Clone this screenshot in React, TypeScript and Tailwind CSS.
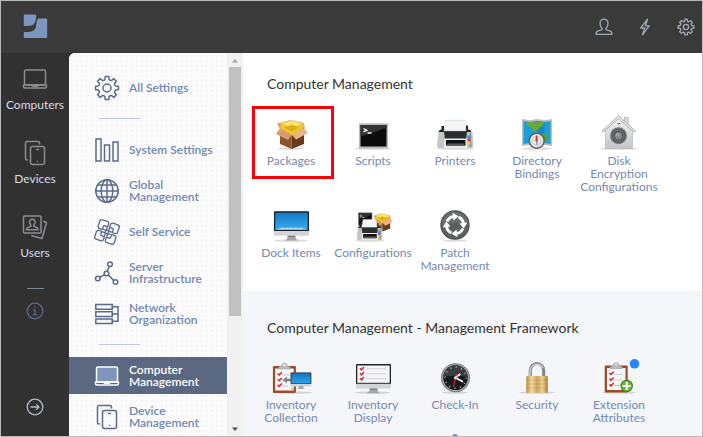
import type { ReactNode } from 'react';

/* ---------- line icons ---------- */

function gearPath(c: number, outer: number, root: number) {
  const step = Math.PI / 4;
  const at = (r: number, a: number) => `${(c + r * Math.sin(a)).toFixed(2)} ${(c - r * Math.cos(a)).toFixed(2)}`;
  let d = '';
  for (let i = 0; i < 8; i++) {
    const a = i * step;
    d += `${i === 0 ? 'M' : 'L'}${at(root, a - 0.24)}L${at(outer, a - 0.16)}L${at(outer, a + 0.16)}L${at(root, a + 0.24)}`;
    d += `Q${at(root * 0.9, a + step / 2)} ${at(root, a + step - 0.24)}`;
  }
  return d + 'Z';
}

type LineProps = { size?: number; weight?: number; children: ReactNode };

function Line({ size = 26, weight = 1.5, children }: LineProps) {
  return (
    <svg
      width={size}
      height={size}
      viewBox={`0 0 ${size} ${size}`}
      fill="none"
      stroke="currentColor"
      strokeWidth={weight}
      strokeLinejoin="round"
      strokeLinecap="round"
      aria-hidden="true"
    >
      {children}
    </svg>
  );
}

const GearIcon = () => (
  <Line>
    <path d={gearPath(13, 11.6, 8.8)} />
    <circle cx="13" cy="13" r="4" />
  </Line>
);

const SmallGearIcon = () => (
  <Line size={18} weight={1.3}>
    <path d={gearPath(9, 7.9, 6)} />
    <circle cx="9" cy="9" r="2.6" />
  </Line>
);

const PersonIcon = () => (
  <Line size={18} weight={1.3}>
    <path d="M9 1.200c-2.500 0-4 1.700-4 4 0 2 .5 3.400 1.700 4.800.6.8.3 1.700-.6 2L2.600 13.200c-1 .4-1.600 1.300-1.600 3.100h16c0-1.800-.6-2.700-1.600-3.100L11.900 12c-.9-.3-1.200-1.200-.6-2C12.500 8.600 13 7.200 13 5.200c0-2.300-1.500-4-4-4z" />
  </Line>
);

const BoltIcon = () => (
  <Line size={18} weight={1.3}>
    <path d="M11.500 1.200L4.800 10h4L6.500 16.800 13.200 7.800H9.500z" />
  </Line>
);

const LaptopIcon = ({ fill = 'none' }: { fill?: string }) => (
  <Line>
    <rect x="2.500" y="4" width="21" height="15" rx="1.500" fill={fill} />
    <path d="M1.500 19h23v1.500q0 1.500-1.500 1.500h-20q-1.500 0-1.500-1.500zM10 19.300q0 1 1 1h4q1 0 1-1" />
  </Line>
);

const DeviceIcon = () => (
  <Line>
    <path d="M5.500 20H5q-1.500 0-1.500-1.500V3Q3.500 1.500 5 1.500h11q1.500 0 1.500 1.500v1" />
    <rect x="8.500" y="6.500" width="14" height="18" rx="2" />
    <path d="M14.500 9.500h2M15.500 21.500v.1" />
  </Line>
);

const PhotosIcon = () => (
  <Line>
    <rect x="1.500" y="2" width="17.500" height="17" rx="1" />
    <path d="M10.200 5.200c-2 0-2.800 1.400-2.600 3 .1 1.300.6 2.200 1.200 2.900v1.300L5.300 13.800q-.8.5-.8 2h11.500q0-1.500-.8-2l-3.400-1.400v-1.300c.6-.7 1.100-1.600 1.200-2.900.2-1.600-.8-3-2.800-3z" />
    <path d="M21.500 7.500l3 1-4.500 16L9.800 21.700" />
  </Line>
);

const InfoIcon = () => (
  <Line size={18} weight={1.3}>
    <circle cx="9" cy="9" r="7.800" />
    <path d="M7.500 7.800H9v5M7.300 12.900h3.400M9 5v.3" />
  </Line>
);

const ArrowIcon = () => (
  <Line size={18} weight={1.3}>
    <circle cx="9" cy="9" r="7.800" />
    <path d="M5 9h8M10.500 6.600L13 9l-2.500 2.400" />
  </Line>
);

const BarsIcon = () => (
  <Line>
    <path d="M2 2h5v22H2zM10.500 8h5v16h-5zM19 5h5v19h-5z" strokeLinejoin="miter" />
  </Line>
);

const GlobeIcon = () => (
  <Line>
    <circle cx="13" cy="13" r="11.200" />
    <ellipse cx="13" cy="13" rx="5.800" ry="11.200" />
    <path d="M13 2v22M2 13h22M4 7h18M4 19h18" />
  </Line>
);

const SelfServiceIcon = () => (
  <Line weight={1.3}>
    <g transform="rotate(18 13 13)">
      <path d="M12 7.500V5Q12 2.800 10 2.800H5Q2.800 2.800 2.800 5v5q0 2 2.200 2h2.500M14 7.500V5q0-2.200 2-2.200h5q2.200 0 2.200 2.200v5q0 2-2.200 2h-2.500M12 18.500V21q0 2.200-2 2.200H5Q2.800 23.200 2.800 21v-5q0-2 2.200-2h2.500M14 18.500V21q0 2.200 2 2.200h5q2.200 0 2.200-2.200v-5q0-2-2.200-2h-2.500" />
      <path d="M9 7.800h2.800v3.800H7.800V9q0-1.200 1.200-1.200zM14.200 7.800H17q1.200 0 1.200 1.200v2.600h-4zM7.800 14.200h4v4H9q-1.200 0-1.200-1.200zM14.200 14.200h4V17q0 1.200-1.200 1.200h-2.800z" />
      <circle cx="13" cy="13" r="1.700" />
    </g>
  </Line>
);

const NodesIcon = () => (
  <Line>
    <circle cx="12.500" cy="13.500" r="2.300" />
    <circle cx="16" cy="4.300" r="2.300" />
    <circle cx="3.800" cy="18.500" r="2.300" />
    <circle cx="21.500" cy="22" r="2.300" />
    <path d="M13.300 11.300L15.200 6.500M10.500 14.700L5.800 17.300M14.300 15l5.400 5.400" />
  </Line>
);

const RacksIcon = () => (
  <Line>
    <path d="M1.800 3.500h16.500v4.700H1.800zM1.800 10.700h16.500v4.700H1.800zM1.800 17.900h16.500v4.700H1.800z" strokeLinejoin="miter" />
    <path d="M18.300 5.800H24v14.400h-5.700M18.300 13H24" strokeLinejoin="miter" />
  </Line>
);

const Logo = () => (
  <svg width="25" height="25" viewBox="0 0 25 25" fill="#7c96bf" role="img" aria-label="Jamf">
    <path d="M1.500 0.500h10.700q1 0 1 1c-.1 4.500-.8 8-3.500 9.600-1.500.9-4 .9-8.200.9q-.7 0-.7-.8V1.300q0-.8.7-.8z" />
    <path d="M16.500 4.500h6.800q.9 0 .9.900v17.300q0 1.200-1.200 1.200H2q-1.200 0-1.200-1.200v-3.700q0-.9.9-.9c5 0 8.500-.3 10.300-3 1.500-2.200 1.300-7.600 2.300-9.300q.8-1.300 2.200-1.300z" />
  </svg>
);

/* ---------- picture icons ---------- */

function Pic({ children }: { children: ReactNode }) {
  return (
    <svg width="44" height="36" viewBox="0 0 44 36" aria-hidden="true">
      {children}
    </svg>
  );
}

const Shadow = ({ cx = 22, rx = 17 }: { cx?: number; rx?: number }) => (
  <ellipse cx={cx} cy="33.600" rx={rx} ry="1.200" fill="#000" opacity="0.14" />
);

const BoxShape = () => (
  <>
    <path d="M11 13l11.700 6V34L11 29z" fill="#8a5630" />
    <path d="M35 13l-12.300 6V34L35 29z" fill="#673a1b" />
    <path d="M11 13l11.700-6L35 13l-12.300 7z" fill="#c48a2f" />
    <path d="M8 8.500L21.500 5 23 6.500 11 14z" fill="#dd9c6c" />
    <path d="M35 8L23.500 5.200 22.500 7 36 14z" fill="#e6ae80" />
    <path d="M11.500 8.500L22.700 5.500 33.500 9v5l-10.800 6.500L11.500 14z" fill="#edc72c" />
    <path d="M12 8.300L22.700 5.800 33 8.800l-10.300 4.500z" fill="#fae56a" />
    <path d="M15.500 12.500l7.200-2.700 7.500 2.700-7.500 4z" fill="#dcae1c" />
    <path d="M11 13.200l11.700 6.600-3.700 5.300L7 19z" fill="#dc9a6c" />
    <path d="M35 13.200l-12.300 6.600 4.500 4.700L39 18z" fill="#ebb38d" />
  </>
);

const TerminalShape = () => (
  <>
    <rect x="8" y="8.300" width="29" height="25.200" fill="#b9bcbc" />
    <rect x="9.500" y="10" width="26" height="21.500" fill="#0c0c0c" />
    <path d="M9.500 21.500L35.500 13V10h-26z" fill="#333" />
    <path d="M12.500 13.500l3.300 1.700-3.300 1.700M16.500 18h4" fill="none" stroke="#fff" strokeWidth="1.300" />
  </>
);

const PrinterShape = () => (
  <>
    <path d="M5.500 17.500q.5-3 3-3V11h2.500v3h22v-3.500H35v4q3 0 3.500 3z" fill="#242424" />
    <path d="M13 5.300h18.500L33 16H11z" fill="#f4f5f6" stroke="#cfd2d4" strokeWidth="0.600" />
    <path d="M5.500 17h34l.8 13q0 3-2 3H6q-2 0-2-3z" fill="#c3c6c9" />
    <path d="M11 16.500h23l-.8 8H12z" fill="#2b2c2e" />
    <path d="M11.500 23.500h22.500v9.500H11z" fill="#ececed" />
    <path d="M13 25h19.500v5.500H13z" fill="#101010" />
    <path d="M14.500 28.500h16.500l.8 2.500H13.500z" fill="#5a5b5d" />
    <path d="M36.500 18h1.500l.5 14h-2z" fill="#8d9194" />
    <path d="M34.500 20.500h2.800v3h-2.800z" fill="#14a3e0" />
    <path d="M34.500 23.500h2.800v3h-2.800z" fill="#e52a8e" />
    <path d="M34.500 26.500h2.800v3h-2.800z" fill="#f1d21e" />
  </>
);

const MonitorBody = ({ screen }: { screen: string }) => (
  <>
    <path d="M19 28h7l1 4 2.500 1.500h-14L18 32z" fill="#a4a8ab" />
    <path d="M19 28h7l.5 2h-8z" fill="#777b7e" />
    <rect x="5" y="4.300" width="35" height="24.500" rx="1" fill="#d2d5d7" />
    <path d="M5 5.300q0-1 1-1h33q1 0 1 1V24H5z" fill="#1e2226" />
    <rect x="6.300" y="5.700" width="32.400" height="17.300" fill={screen} />
  </>
);

const ClipboardShape = () => (
  <>
    <rect x="7.700" y="6.500" width="23" height="27" rx="1.200" fill="#9a4c28" />
    <path d="M10 9h18.500v22H10z" fill="#f7f7f7" />
    <path d="M24 31l4.500-4.500V31z" fill="#c9c9c9" />
    <path d="M13 9.500q0-2.700 3.500-3 .3-3 2.700-3t2.700 3q3.500.3 3.500 3z" fill="#b9bcbf" stroke="#8f9396" strokeWidth="0.500" />
    <circle cx="19.200" cy="5.500" r="1" fill="#fff" />
    <path d="M17 15.500h9M17 21h9M17 26.500h6" stroke="#c6c9cc" strokeWidth="1" />
    <path d="M12.500 14l1.500 1.500 2.700-2.800M12.500 19.700l1.500 1.500 2.700-2.800M12.500 25.400l1.500 1.500 2.700-2.800" fill="none" stroke="#cf2028" strokeWidth="1.500" />
  </>
);

const PackagePic = () => (
  <Pic>
    <Shadow rx={14} />
    <BoxShape />
  </Pic>
);
const ScriptPic = () => (
  <Pic>
    <Shadow rx={19} />
    <TerminalShape />
  </Pic>
);
const PrinterPic = () => (
  <Pic>
    <Shadow rx={20} />
    <PrinterShape />
  </Pic>
);
const DirectoryPic = () => (
  <Pic>
    <Shadow rx={16} />
    <path d="M7 4l7.500 1.200L22 4l7.500 1.200L37 4v27l-7.500-1L22 31l-7.500-1L7 31z" fill="#b9c0c4" />
    <path d="M8.500 6l6 1L22 6l7.500 1 6-1v23l-6-1-7.500 1-7.500-1-6 1z" fill="#1b9fd8" />
    <path d="M22 6l7.500 1v21L22 29z" fill="#1388c2" />
    <path d="M10 8.500l4.500-1.500 7 .3 5-.8 3 1.500-1.500 2.500-3 1.500-2 3-2.500.5 1 2 2.500 1-1 .8-4-2-3-4-3-2.500z" fill="#6aa83a" />
    <path d="M25 18l4 .5 4 2.500-1 4-2 3z" fill="#58a52d" />
    <circle cx="21.700" cy="25.700" r="8.200" fill="#5c6063" />
    <circle cx="21.700" cy="25.700" r="6.700" fill="#e8eaeb" />
    <circle cx="21.700" cy="25.700" r="4.500" fill="none" stroke="#b0b4b6" strokeWidth="0.700" />
    <path d="M21 20.500h1.400l.6 5.500h-2.600z" fill="#d93a32" />
    <path d="M20.600 26h2.300l-1 5z" fill="#8c9092" />
  </Pic>
);
const DiskPic = () => (
  <Pic>
    <defs>
      <linearGradient id="house" x2="0" y2="1">
        <stop stopColor="#f5f5f5" />
        <stop offset="1" stopColor="#c2c4c5" />
      </linearGradient>
    </defs>
    <Shadow rx={19} />
    <path d="M27.500 2.500h3.700v8h-3.700z" fill="#dcdddd" stroke="#999c9d" strokeWidth="0.600" />
    <path d="M21.500 1.500L35.500 15v18.500h-27V15z" fill="url(#house)" stroke="#b0b2b3" strokeWidth="0.600" />
    <path d="M21.500.8L38.500 16l-1.800.8L21.500 3.600 6.600 16.800 5 16z" fill="#e9eaea" stroke="#929697" strokeWidth="0.700" />
    <path d="M20 8h3.500l-1.700 2z" fill="#777a7c" />
    <circle cx="21.500" cy="20.700" r="8.500" fill="#74787a" />
    <circle cx="21.500" cy="20.700" r="7" fill="#4c4f51" />
    <circle cx="21.500" cy="20.700" r="5.500" fill="none" stroke="#8d9092" strokeWidth="0.800" />
    <circle cx="21.500" cy="20.700" r="3.700" fill="#85898b" />
    <circle cx="20.500" cy="19.500" r="1.500" fill="#a7aaab" />
  </Pic>
);
const DockPic = () => (
  <Pic>
    <defs>
      <linearGradient id="desk" x2="0" y2="1">
        <stop stopColor="#1678c4" />
        <stop offset="1" stopColor="#36aef2" />
      </linearGradient>
    </defs>
    <Shadow rx={17} />
    <MonitorBody screen="url(#desk)" />
    <path d="M10 20.500h25l1.500 2.500h-28z" fill="#6fbdf0" />
    <path d="M12 21.500h21" stroke="#e8f5ff" strokeWidth="1.200" strokeDasharray="1.600 1.200" />
  </Pic>
);
const ConfigPic = () => (
  <Pic>
    <Shadow cx={19} rx={15} />
    <g transform="translate(17.500 3.500) scale(.62)">
      <BoxShape />
    </g>
    <g transform="translate(3 .2) scale(.5 .58)">
      <TerminalShape />
    </g>
    <g transform="translate(3 8.500) scale(.7 .74)">
      <PrinterShape />
    </g>
  </Pic>
);
const PatchPic = () => (
  <Pic>
    <Shadow rx={12} />
    <circle cx="22" cy="18" r="14.700" fill="#4b4d50" />
    <circle cx="22" cy="18" r="13.700" fill="#5c5f62" />
    <path d="M8.500 18a13.500 13.500 0 0 1 27 0q-13-4-27 0z" fill="#6a6d70" />
    {[0, 90, 180, 270].map((turn) => (
      <g key={turn} transform={`rotate(${turn} 22 18)`}>
        <path d="M14 14.500A8.700 8.700 0 0 1 20.500 9.500" fill="none" stroke="#fff" strokeWidth="3" />
        <path d="M19.500 5.700l6 3.500-5 4.300z" fill="#fff" />
      </g>
    ))}
  </Pic>
);
const CollectionPic = () => (
  <Pic>
    <defs>
      <linearGradient id="blue" x2="0" y2="1">
        <stop stopColor="#1673be" />
        <stop offset="1" stopColor="#2fa4ea" />
      </linearGradient>
    </defs>
    <Shadow cx={24} rx={20} />
    <g transform="translate(-3.800 .5)">
      <ClipboardShape />
    </g>
    <path d="M13.500 21l4.500-3.500v2.200h5v2.600h-5v2.200z" fill="#7d8184" />
    <g transform="translate(18.700 11) scale(.59 .57)">
      <MonitorBody screen="url(#blue)" />
    </g>
  </Pic>
);
const DisplayPic = () => (
  <Pic>
    <Shadow rx={18} />
    <g transform="translate(0 .8)">
      <MonitorBody screen="#f5f6f7" />
      <path d="M15 9h20M15 14h20M15 19h20" stroke="#cdd0d3" strokeWidth="0.900" />
      <path d="M9 8.500l1.500 1.500 2.500-2.800M9 13.500l1.500 1.500 2.500-2.800M9 18.500l1.500 1.500 2.500-2.800" fill="none" stroke="#d1262c" strokeWidth="1.500" />
    </g>
  </Pic>
);
const ClockPic = () => (
  <Pic>
    <Shadow rx={13} />
    <circle cx="22.500" cy="18.700" r="14.500" fill="#75797c" />
    <circle cx="22.500" cy="18.700" r="13.500" fill="#a9adb0" />
    <circle cx="22.500" cy="18.700" r="12.300" fill="#191a1c" />
    <path d="M10.500 18a12 12 0 0 1 24 0q-12-3-24 0z" fill="#3b3d40" />
    <circle cx="22.500" cy="18.700" r="10.500" fill="none" stroke="#d5d7d9" strokeWidth="1.700" strokeDasharray=".8 4.698" />
    <path d="M22.500 18.700l4.800-3.700M22.500 18.700l7.500 4" stroke="#fff" strokeWidth="1.700" />
    <path d="M23.500 15l-3 13" stroke="#d9262c" strokeWidth="1.200" />
    <circle cx="22.500" cy="18.700" r="1.500" fill="#eee" />
  </Pic>
);
const LockPic = () => (
  <Pic>
    <defs>
      <linearGradient id="brass">
        <stop stopColor="#b98e48" />
        <stop offset=".25" stopColor="#f3dba2" />
        <stop offset=".5" stopColor="#cfa55c" />
        <stop offset=".75" stopColor="#ecd093" />
        <stop offset="1" stopColor="#a97f3b" />
      </linearGradient>
    </defs>
    <Shadow rx={18} />
    <path d="M15.300 18v-6.500a6.700 7 0 0 1 13.400 0V18" fill="none" stroke="#85898d" strokeWidth="3.200" />
    <path d="M15 18v-6.500a7 7.200 0 0 1 13 -2.500" fill="none" stroke="#d9dcde" strokeWidth="1.200" />
    <rect x="11.300" y="17" width="21.500" height="16.700" rx="0.800" fill="url(#brass)" />
    <path d="M11.500 21h21M11.500 25h21M11.500 29h21" stroke="#a87d3c" strokeWidth="0.500" opacity="0.500" />
  </Pic>
);
const ExtensionPic = () => (
  <Pic>
    <Shadow rx={17} />
    <ClipboardShape />
    <circle cx="29.700" cy="27" r="6.200" fill="#2f7d20" />
    <circle cx="29.700" cy="27" r="5.300" fill="#6cb52f" />
    <path d="M29.700 23v8M25.700 27h8" stroke="#fff" strokeWidth="2" />
    <circle cx="37.500" cy="4.800" r="4.800" fill="#2389fb" />
  </Pic>
);
const AppPic = () => (
  <Pic>
    <circle cx="22" cy="4" r="3" fill="#5f93cc" />
  </Pic>
);

/* ---------- layout ---------- */

const navItems = [
  { label: 'Computers', icon: <LaptopIcon /> },
  { label: 'Devices', icon: <DeviceIcon /> },
  { label: 'Users', icon: <PhotosIcon /> },
];

const settingsGroups = [
  [{ label: 'All Settings', icon: <GearIcon /> }],
  [
    { label: 'System Settings', icon: <BarsIcon /> },
    { label: 'Global Management', icon: <GlobeIcon /> },
    { label: 'Self Service', icon: <SelfServiceIcon /> },
    { label: 'Server Infrastructure', icon: <NodesIcon /> },
    { label: 'Network Organization', icon: <RacksIcon /> },
  ],
  [
    { label: 'Computer Management', icon: <LaptopIcon fill="#7d95bf" />, active: true },
    { label: 'Device Management', icon: <DeviceIcon /> },
  ],
];

type TileProps = { label: string; icon: ReactNode; marked?: boolean };

function Tile({ label, icon, marked }: TileProps) {
  return (
    <a href="#" className="relative flex w-[82px] flex-col items-center gap-[3px] text-center text-[12px] leading-[13px] text-[#7489b3]">
      {icon}
      {label}
      {marked && <span className="absolute -top-[9px] left-[2px] h-[73px] w-[82px] border-3 border-[#fb0007]" />}
    </a>
  );
}

const management: TileProps[] = [
  { label: 'Packages', icon: <PackagePic />, marked: true },
  { label: 'Scripts', icon: <ScriptPic /> },
  { label: 'Printers', icon: <PrinterPic /> },
  { label: 'Directory Bindings', icon: <DirectoryPic /> },
  { label: 'Disk Encryption Configurations', icon: <DiskPic /> },
  { label: 'Dock Items', icon: <DockPic /> },
  { label: 'Configurations', icon: <ConfigPic /> },
  { label: 'Patch Management', icon: <PatchPic /> },
];

const framework: TileProps[] = [
  { label: 'Inventory Collection', icon: <CollectionPic /> },
  { label: 'Inventory Display', icon: <DisplayPic /> },
  { label: 'Check-In', icon: <ClockPic /> },
  { label: 'Security', icon: <LockPic /> },
  { label: 'Extension Attributes', icon: <ExtensionPic /> },
];

function ScrollBar() {
  return (
    <div className="flex w-4 shrink-0 flex-col items-center bg-[#f1f1f1]" aria-hidden="true">
      <svg width="14" height="14" viewBox="0 0 14 14" className="shrink-0">
        <path d="M4 9.500h6L7 6z" fill="#a3a3a3" />
      </svg>
      <div className="flex-1">
        <div className="h-[70%] w-3 bg-[#c1c1c1]" />
      </div>
      <svg width="14" height="14" viewBox="0 0 14 14" className="shrink-0">
        <path d="M4 5.500h6L7 9z" fill="#505050" />
      </svg>
    </div>
  );
}

export default function App() {
  return (
    <div className="flex h-screen flex-col overflow-hidden border border-[#b9bbba] bg-[#3a3a3a] font-['Lato',sans-serif]">
      <header className="flex h-[52px] shrink-0 items-center justify-between pr-[7px] pb-px pl-[22px]">
        <Logo />
        <div className="flex items-center gap-[23px] text-[#a3abb8]">
          <button type="button" aria-label="Account"><PersonIcon /></button>
          <button type="button" aria-label="Notifications"><BoltIcon /></button>
          <button type="button" aria-label="Settings"><SmallGearIcon /></button>
        </div>
      </header>

      <div className="flex min-h-0 flex-1 bg-[#313131]">
        <nav className="flex w-[68px] shrink-0 flex-col items-center pt-[13px] pb-5">
          {navItems.map((item) => (
            <a key={item.label} href="#" className="flex h-[74px] flex-col items-center gap-[5px] text-[12px] leading-4 text-[#d3dcea]">
              <span className="text-[#8b8d90]">{item.icon}</span>
              {item.label}
            </a>
          ))}
          <hr className="w-[17px] border-[#7b8594]" />
          <button type="button" aria-label="About" className="mt-[13px] text-[#5d6c88]"><InfoIcon /></button>
          <button type="button" aria-label="Expand" className="mt-auto text-[#b4bcc8]"><ArrowIcon /></button>
        </nav>

        <div className="flex min-w-0 flex-1 overflow-hidden rounded-tl-md bg-white">
          <aside className="w-[158px] shrink-0 overflow-hidden bg-[#fbfbfb] bg-[radial-gradient(#f5f5f5_1px,transparent_1px)] bg-[length:5px_5px] pt-4">
            {settingsGroups.map((group, index) => (
              <div key={index}>
                {index > 0 && <hr className="my-3 ml-[30px] w-[41px] border-[#c3ccd6]" />}
                <div className="flex flex-col gap-1">
                  {group.map((item) => (
                    <a
                      key={item.label}
                      href="#"
                      className={
                        'active' in item
                          ? 'flex h-[37px] items-center gap-[9px] bg-[#5a6882] pr-3 pl-[25px] text-[12px] leading-3 font-semibold text-white'
                          : 'flex h-[37px] items-center gap-[9px] pr-3 pl-[25px] text-[12px] leading-3 font-semibold text-[#7188b3]'
                      }
                    >
                      <span className={'active' in item ? 'shrink-0 text-white' : 'shrink-0 text-[#5a6b8c]'}>{item.icon}</span>
                      <span className="max-w-[84px]">{item.label}</span>
                    </a>
                  ))}
                </div>
              </div>
            ))}
          </aside>

          <ScrollBar />

          <main className="flex min-w-0 flex-1 flex-col overflow-hidden">
            <section className="shrink-0 pt-[21px] pb-[19px] pl-[7px]">
              <h2 className="pl-[17px] text-[14px] leading-5 text-[#333]">Computer Management</h2>
              <div className="mt-[21px] flex flex-wrap gap-y-[14px]">
                {management.map((tile) => <Tile key={tile.label} {...tile} />)}
              </div>
            </section>
            <section className="flex-1 bg-[#f4f6fa] pt-[27px] pl-[7px]">
              <h2 className="pl-[17px] text-[14px] leading-5 text-[#333]">Computer Management - Management Framework</h2>
              <div className="mt-[21px] flex flex-wrap gap-y-[9px]">
                {framework.map((tile) => <Tile key={tile.label} {...tile} />)}
                <a href="#" aria-label="More" className="ml-[164px] flex w-[82px] justify-center"><AppPic /></a>
              </div>
            </section>
          </main>
        </div>
      </div>
    </div>
  );
}
